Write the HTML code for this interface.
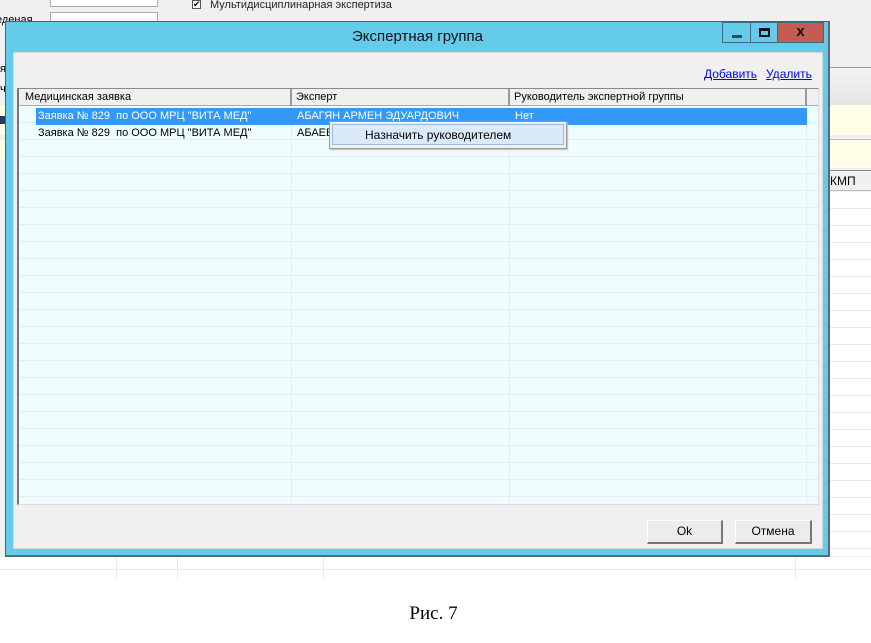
<!DOCTYPE html>
<html><head><meta charset="utf-8"><style>
*{margin:0;padding:0;box-sizing:border-box}
body{width:871px;height:643px;background:#fff;position:relative;overflow:hidden;font-family:"Liberation Sans",sans-serif;font-size:11px;color:#000}
.a{position:absolute}
</style></head><body>
<div class="a" style="left:0;top:0;width:871px;height:578px;background:#f0f0f0"></div>
<div class="a" style="left:50px;top:-2px;width:108px;height:9px;background:#fff;border:1px solid #aaa"></div>
<div class="a" style="left:50px;top:12px;width:108px;height:12px;background:#fff;border:1px solid #aaa"></div>
<div class="a" style="left:192px;top:0px;width:9px;height:9px;border:1px solid #555;background:#fff;font-size:9px;line-height:7px">✔</div>
<div class="a" style="left:210px;top:-1px;font-size:11px;color:#222">Мультидисциплинарная экспертиза</div>
<div class="a" style="left:-4px;top:14px;font-size:11px">еденая</div>
<div class="a" style="left:0;top:63px;font-size:11px">я</div>
<div class="a" style="left:0;top:83px;font-size:11px">ч</div>
<div class="a" style="left:0;top:105px;width:6px;height:30px;background:#fffde8"></div>
<div class="a" style="left:0;top:116px;width:6px;height:8px;background:#2a3a5a"></div>
<div class="a" style="left:0;top:140px;width:6px;height:20px;background:#fffde8"></div>
<div class="a" style="left:830px;top:67px;width:41px;height:1px;background:#999"></div>
<div class="a" style="left:830px;top:68px;width:41px;height:37px;background:linear-gradient(#f4f4f4,#e4e4e4)"></div>
<div class="a" style="left:830px;top:105px;width:41px;height:30px;background:#fffde6"></div>
<div class="a" style="left:830px;top:139px;width:41px;height:1px;background:#bbb"></div>
<div class="a" style="left:830px;top:140px;width:41px;height:28px;background:#fffde6"></div>
<div class="a" style="left:830px;top:170px;width:41px;height:1px;background:#888"></div>
<div class="a" style="left:830px;top:171px;width:41px;height:20px;background:#f0f0f0;border-bottom:1px solid #bbb;font-size:12px;line-height:20px">КМП</div>
<div class="a" style="left:830px;top:192px;width:41px;height:386px;background:#fff;background-image:repeating-linear-gradient(#fff 0,#fff 16px,#eaeaea 16px,#eaeaea 17px)"></div>
<div class="a" style="left:0;top:556px;width:871px;height:22px;background:#fff;border-top:1px solid #eee"></div>
<div class="a" style="left:0;top:569px;width:871px;height:1px;background:#eaeaea"></div>
<div class="a" style="left:116px;top:556px;width:1px;height:22px;background:#eaeaea"></div>
<div class="a" style="left:177px;top:556px;width:1px;height:22px;background:#eaeaea"></div>
<div class="a" style="left:323px;top:556px;width:1px;height:22px;background:#eaeaea"></div>
<div class="a" style="left:795px;top:556px;width:1px;height:22px;background:#eaeaea"></div>
<div class="a" style="left:0;top:578px;width:871px;height:65px;background:#fff"></div>
<div class="a" style="left:5px;top:21px;width:825px;height:536px;background:#64cbea;border:1px solid #4a6070;border-right:2px solid #5a6a78;border-bottom:2px solid #5a6a78"></div>
<div class="a" style="left:5px;top:28px;width:825px;text-align:center;font-size:15px;color:#111">Экспертная группа</div>
<div class="a" style="left:722px;top:22px;width:29px;height:21px;border:1px solid #3d6b80;background:#64cbea"><div class="a" style="left:9px;top:12px;width:10px;height:3px;background:#2a4f60"></div></div>
<div class="a" style="left:751px;top:22px;width:27px;height:21px;border:1px solid #3d6b80;border-left:none;background:#64cbea"><div class="a" style="left:8px;top:5px;width:11px;height:9px;border:2px solid #111;border-top-width:3px"></div></div>
<div class="a" style="left:778px;top:22px;width:46px;height:21px;border:1px solid #3d6b80;border-left:none;background:#c45c52;text-align:center;font-weight:bold;font-size:15px;line-height:18px;color:#111">x</div>
<div class="a" style="left:13px;top:52px;width:810px;height:497px;background:#f0f0f0;border:1px solid #d8d8d8"></div>
<div class="a" style="left:704px;top:67px;color:#0000ee;text-decoration:underline;font-size:12px">Добавить</div>
<div class="a" style="left:766px;top:67px;color:#0000ee;text-decoration:underline;font-size:12px">Удалить</div>
<div class="a" style="left:17px;top:88px;width:802px;height:417px;background:#eefeff;border:1px solid #888;border-right-color:#ddd;border-bottom-color:#ddd;border-left:2px solid #777;background-image:repeating-linear-gradient(#eefeff 0,#eefeff 16px,#e4eef0 16px,#e4eef0 17px);background-position:0 17px"></div>
<div class="a" style="left:19px;top:89px;width:799px;height:17px;background:#f0f0f0;border-bottom:1px solid #aaa"></div>
<div class="a" style="left:291px;top:89px;width:1px;height:415px;background:#e4eef0"></div>
<div class="a" style="left:509px;top:89px;width:1px;height:415px;background:#e4eef0"></div>
<div class="a" style="left:806px;top:89px;width:1px;height:415px;background:#e4eef0"></div>
<div class="a" style="left:290px;top:89px;width:2px;height:17px;background:#999"></div>
<div class="a" style="left:508px;top:89px;width:2px;height:17px;background:#999"></div>
<div class="a" style="left:805px;top:89px;width:2px;height:17px;background:#999"></div>
<div class="a" style="left:25px;top:91px">Медицинская заявка</div>
<div class="a" style="left:296px;top:91px">Эксперт</div>
<div class="a" style="left:514px;top:91px">Руководитель экспертной группы</div>
<div class="a" style="left:36px;top:108px;width:771px;height:17px;background:#3398f8"></div>
<div class="a" style="left:38px;top:110px;color:#fff">Заявка № 829&nbsp; по ООО МРЦ "ВИТА МЕД"</div>
<div class="a" style="left:297px;top:110px;color:#fff">АБАГЯН АРМЕН ЭДУАРДОВИЧ</div>
<div class="a" style="left:515px;top:110px;color:#fff">Нет</div>
<div class="a" style="left:38px;top:127px">Заявка № 829&nbsp; по ООО МРЦ "ВИТА МЕД"</div>
<div class="a" style="left:297px;top:127px">АБАЕВ</div>
<div class="a" style="left:329px;top:121px;width:238px;height:28px;background:#f0f0f0;border:1px solid #999;box-shadow:1px 1px 1px #bbb"></div>
<div class="a" style="left:332px;top:124px;width:232px;height:21px;background:#dbeafa;border:1px solid #9ab8e0"></div>
<div class="a" style="left:365px;top:128px;font-size:12px">Назначить руководителем</div>
<div class="a" style="left:647px;top:520px;width:76px;height:24px;background:#ececec;border:1px solid #fff;border-right:2px solid #777;border-bottom:2px solid #777;text-align:center;line-height:21px;font-size:12px">Ok</div>
<div class="a" style="left:735px;top:520px;width:77px;height:24px;background:#ececec;border:1px solid #fff;border-right:2px solid #777;border-bottom:2px solid #777;text-align:center;line-height:21px;font-size:12px">Отмена</div>
<div class="a" style="left:0;top:603px;width:871px;text-align:center;font-family:'Liberation Serif',serif;font-size:19px"><span style="position:relative;left:-2px">Рис. 7</span></div>
</body></html>
